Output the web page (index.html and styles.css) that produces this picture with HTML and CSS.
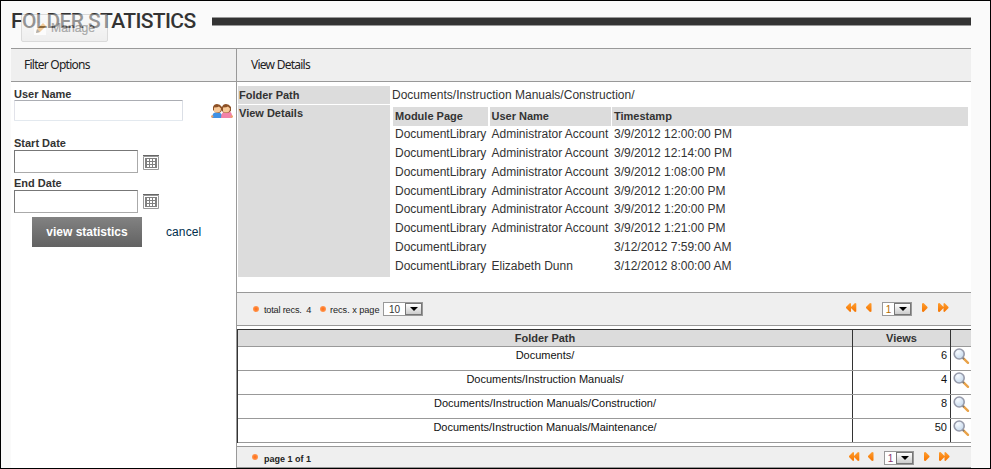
FILE: index.html
```
<!DOCTYPE html>
<html lang="en">
<head>
<meta charset="utf-8">
<title>Folder Statistics</title>
<link rel="stylesheet" href="styles.css">
</head>
<body>
<svg class="defs" aria-hidden="true">
  <defs>
    <radialGradient id="lens" cx=".35" cy=".3" r=".8"><stop offset="0" stop-color="#f8fbff"/><stop offset="1" stop-color="#c0d5ea"/></radialGradient>
    <linearGradient id="amber" x2="0" y2="1"><stop offset="0" stop-color="#ff9d2e"/><stop offset="1" stop-color="#f57400"/></linearGradient>
    <symbol id="search" viewBox="0 0 17 17"><path d="M10.2 10.2l4.8 4.6" stroke="#e9a248" stroke-width="2.4" stroke-linecap="round"/><path d="M9.5 9.7l1.5 1.4" stroke="#777" stroke-width="1.6"/><circle cx="6.2" cy="6" r="5" fill="url(#lens)" stroke="#979bab" stroke-width="1.6"/></symbol>
    <symbol id="prev" viewBox="0 0 6 9"><path d="M4 0L5.5 .5V8.5L4 9L0 5V4z" fill="url(#amber)"/></symbol>
    <symbol id="next" viewBox="0 0 6 9"><path d="M1.5 0L0 .5V8.5L1.5 9L5.5 5V4z" fill="url(#amber)"/></symbol>
    <symbol id="first" viewBox="0 0 11 9"><path d="M4 0L5 .5V8.5L4 9L0 5V4zM9 0L10.3 .5V8.5L9 9L5 5V4z" fill="url(#amber)"/></symbol>
    <symbol id="last" viewBox="0 0 11 9"><path d="M1.5 0L0 .5V8.5L1.5 9L5.5 5V4zM6.5 0L5.5 .5V8.5L6.5 9L10.5 5V4z" fill="url(#amber)"/></symbol>
    <symbol id="calendar" viewBox="0 0 16 15"><path d="M.5 1.5h15v13H.5z" fill="#fff" stroke="#999"/><path d="M0 .5h16" stroke="#666"/><path d="M2 3h12v10H2z" fill="#808080"/><path d="M4 4h2v2H4zM7 4h2v2H7zM10 4h2v2h-2zM4 7h2v2H4zM7 7h2v2H7zM10 7h2v2h-2zM4 10h2v2H4zM7 10h2v2H7zM10 10h2v2h-2z" fill="#fff"/></symbol>
  </defs>
</svg>
<div class="frame">
  <header class="title">
    <h1>FOLDER STATISTICS</h1>
    <div class="rule"></div>
    <div class="manage">
      <svg width="13" height="13" viewBox="0 0 13 13"><path d="M0 1h12v12H0z" fill="#fff"/><path d="M2 11l1-4 6-6 3 3-6 6z" fill="#e79d3f"/><path d="M2 11l1-4 3 3z" fill="#666"/></svg>
      <span>Manage</span>
    </div>
  </header>
  <main class="panels">
    <section class="filter">
      <h2 class="bar">Filter Options</h2>
      <form class="form">
        <label class="lb">User Name</label>
        <div class="line user"><span class="field wide"></span>
          <svg class="people" width="22" height="15" viewBox="0 0 22 15"><path d="M1 14q0-6 5-6t6 6z" fill="#3f91e5"/><path d="M10 14q0-7 6-7t5 7z" fill="#f283a8"/><path d="M2 6V3q1-3 4-3t5 3v3q-1 3-4 3T2 6zM11 7V3q1-3 4-3t5 3v4q-2 2-5 2t-4-2z" fill="#8d5126"/><path d="M3 3.5q4 0 5-1l2 2q0 4-3.500 4T3 7zM12 3.500q4 0 5-1l2 2q0 4-3.500 4T12 7z" fill="#f8c998"/><circle cx="1.200" cy="12.500" r="1.200" fill="#eaa36a"/><circle cx="20.800" cy="12.500" r="1.200" fill="#eaa36a"/></svg>
        </div>
        <label class="lb start">Start Date</label>
        <div class="line"><span class="field"></span><svg class="cal" width="16" height="15"><use href="#calendar"/></svg></div>
        <label class="lb end">End Date</label>
        <div class="line"><span class="field"></span><svg class="cal low" width="16" height="15"><use href="#calendar"/></svg></div>
        <div class="actions"><span class="submit">view statistics</span><span class="cancel">cancel</span></div>
      </form>
    </section>
    <section class="details">
      <h2 class="bar">View Details</h2>
      <div class="props">
        <div class="key">Folder Path</div><div class="path">Documents/Instruction Manuals/Construction/</div>
        <div class="key tall">View Details</div>
        <div class="log">
          <div class="row head"><b>Module Page</b><b>User Name</b><b>Timestamp</b></div>
          <div class="row"><span>DocumentLibrary</span><span class="who">Administrator Account</span><span>3/9/2012 12:00:00 PM</span></div>
          <div class="row"><span>DocumentLibrary</span><span class="who">Administrator Account</span><span>3/9/2012 12:14:00 PM</span></div>
          <div class="row"><span>DocumentLibrary</span><span class="who">Administrator Account</span><span>3/9/2012 1:08:00 PM</span></div>
          <div class="row"><span>DocumentLibrary</span><span class="who">Administrator Account</span><span>3/9/2012 1:20:00 PM</span></div>
          <div class="row"><span>DocumentLibrary</span><span class="who">Administrator Account</span><span>3/9/2012 1:20:00 PM</span></div>
          <div class="row"><span>DocumentLibrary</span><span class="who">Administrator Account</span><span>3/9/2012 1:21:00 PM</span></div>
          <div class="row"><span>DocumentLibrary</span><span></span><span>3/12/2012 7:59:00 AM</span></div>
          <div class="row"><span>DocumentLibrary</span><span class="who">Elizabeth Dunn</span><span>3/12/2012 8:00:00 AM</span></div>
        </div>
      </div>
      <div class="pager">
        <i class="dot"></i><span class="total">total recs.&nbsp; 4</span><i class="dot"></i><span class="per">recs. x page</span>
        <span class="select ten"><span>10</span><i></i></span>
        <div class="nav"><svg class="a" width="11" height="9"><use href="#first"/></svg><svg class="b" width="6" height="9"><use href="#prev"/></svg><span class="select"><span>1</span><i></i></span><svg class="c" width="6" height="9"><use href="#next"/></svg><svg width="11" height="9"><use href="#last"/></svg></div>
      </div>
      <div class="grid">
        <div class="g head"><b>Folder Path</b><b>Views</b><b></b></div>
        <div class="g"><span>Documents/</span><span>6</span><svg width="17" height="17"><use href="#search"/></svg></div>
        <div class="g"><span>Documents/Instruction Manuals/</span><span>4</span><svg width="17" height="17"><use href="#search"/></svg></div>
        <div class="g"><span>Documents/Instruction Manuals/Construction/</span><span>8</span><svg width="17" height="17"><use href="#search"/></svg></div>
        <div class="g"><span>Documents/Instruction Manuals/Maintenance/</span><span>50</span><svg width="17" height="17"><use href="#search"/></svg></div>
      </div>
      <div class="pager foot">
        <i class="dot"></i><span class="pages">page 1 of 1</span>
        <div class="nav"><svg class="a" width="11" height="9"><use href="#first"/></svg><svg class="b" width="6" height="9"><use href="#prev"/></svg><span class="select purple"><span>1</span><i></i></span><svg class="c" width="6" height="9"><use href="#next"/></svg><svg width="11" height="9"><use href="#last"/></svg></div>
      </div>
    </section>
  </main>
</div>
</body>
</html>
```
FILE: styles.css
```
* { box-sizing: border-box; }
body { margin: 0; font: 12px/18px "Liberation Sans", Arial, sans-serif; color: #333; overflow: hidden; }
.defs { display: block; width: 0; height: 0; }
.frame { width: 991px; height: 469px; border: 1px solid #000; background: #fafafa; padding: 0 19px 0 10px; }
.title { height: 47px; display: flex; position: relative; }
h1 { margin: 7px 0 0; width: 201px; font: 500 21px/26px Roboto, sans-serif; letter-spacing: -.63px; white-space: nowrap; color: #333; }
.rule { flex: 1; height: 9px; margin-top: 16px; background: #333; border: 1px solid #999; border-width: 1px 0; }
.manage { position: absolute; left: 10px; top: 13px; width: 87px; height: 28px; padding: 7px 0 0 12px; display: flex; gap: 4px; border: 1px solid #bbb; border-radius: 2px; background: linear-gradient(#fafafa, #e4e4e4); opacity: .5; line-height: 12px; color: #555; }
.manage span { font-size: 12.2px; -webkit-text-stroke: .2px #555; }
.panels { display: grid; grid-template-columns: 225px 735px; height: 420px; background: #fff; }
.bar { margin: 0; height: 34px; border: 1px solid #999; border-width: 1px 0; background: #efefef; padding-left: 13px; font: 12px/32px "Noto Sans", sans-serif; color: #222; letter-spacing: -.75px; }
.details { border-left: 1px solid #999; }
.details .bar { padding-left: 14px; }
.form { padding: 6px 0 0 3px; }
.lb { display: block; height: 13px; line-height: 13px; font-size: 11px; font-weight: bold; }
.filter .lb:first-child { height: 12px; }
.line { display: flex; }
.user { height: 37px; }
.field { width: 124px; height: 23px; border: 1px solid #aaa; border-top-color: #777; border-left-color: #777; background: #fff; }
.wide { width: 169px; height: 21px; border-color: #abadb3 #dbdfe6 #e3e9ef #e2e3ea; border-radius: 1px; }
.people { margin: 4px 0 0 28px; }
.start { height: 13px; }
.end { height: 17px; line-height: 20px; }
.cal { margin: 5px 0 0 5px; }
.cal.low { margin-top: 4px; }
.actions { display: flex; padding: 4px 0 0 18px; }
.submit { width: 110px; height: 30px; line-height: 30px; text-align: center; background: linear-gradient(#828282, #626262); color: #fff; font-weight: bold; }
.cancel { margin-left: 24px; line-height: 30px; color: #012f4e; letter-spacing: .1px; }
.props { height: 210px; padding: 4px 3px 0 1px; display: grid; grid-template: 18px 172px / 152px 1fr; gap: 1px 3px; }
.key { background: #dcdcdc; font-size: 11px; font-weight: bold; padding-left: 1px; line-height: 19px; }
.tall { line-height: 17px; }
.path { line-height: 19px; margin-left: -1px; letter-spacing: .01px; }
.log { padding-top: 2px; }
.row { height: 18.86px; line-height: 18.5px; display: grid; grid-template-columns: 95px 121px 1fr; column-gap: 1.5px; white-space: nowrap; }
.row > * { padding-left: 2px; }
.row.head { height: 18px; font-size: 11px; line-height: 19px; }
.row.head b { background: #dcdcdc; }
.pager { height: 34px; border: 1px solid #999; border-width: 1px 0; background: #efefef; display: flex; align-items: flex-start; padding: 9px 22px 0 16px; font-size: 9.2px; line-height: 17px; color: #222; white-space: nowrap; }
.dot { width: 6px; height: 6px; margin-top: 4px; border-radius: 3px; background: radial-gradient(#ff7622 20%, #ffae73); }
.total { width: 47px; margin-left: 5px; white-space: pre; letter-spacing: -.2px; }
.total + .dot { margin-left: 9px; }
.per { width: 50px; margin-left: 4px; letter-spacing: -.05px; }
.select { width: 30px; height: 14px; display: flex; border: 1px solid #999; background: #fff; font-size: 10px; line-height: 13px; color: #b56e00; }
.select span { flex: 1; text-align: center; }
.select i { width: 17px; border: 1px solid #777; background: linear-gradient(#fff, #ccc); display: flex; align-items: center; justify-content: center; }
.select i::after { content: ""; border: 4px solid transparent; border-top-color: #000; border-bottom: 0; }
.ten { width: 40px; color: #333; margin-left: 3px; }
.nav { margin-left: auto; display: flex; }
.nav svg { margin-top: 1px; }
.a { margin-right: 9px; }
.b { margin-right: 10px; }
.c { margin: 0 10px; }
.grid { margin: 3px 0; border: solid #333; border-width: 1px 0 0 1px; }
.g { height: 24px; display: grid; grid-template-columns: 615px 98px 20px; border-bottom: 1px solid #999; font-size: 11px; line-height: 17px; color: #111; text-align: center; }
.g > :nth-child(-n+2) { border-right: 1px solid #333; }
.g span:nth-child(2) { text-align: right; padding-right: 3px; }
.g svg { margin: 1px 0 0 2px; }
.g.head { height: 17px; line-height: 17px; background: #dcdcdc; color: #333; }
.foot { height: 22px; padding: 4px 21px 0 15px; }
.foot .pages { margin-left: 6px; font-weight: bold; line-height: 16px; font-size: 9px; }
.foot .dot { margin-top: 3px; }
.foot .a { margin-right: 8px; }
.foot .c { margin-right: 9px; }
.purple { color: #8a3470; }
```
